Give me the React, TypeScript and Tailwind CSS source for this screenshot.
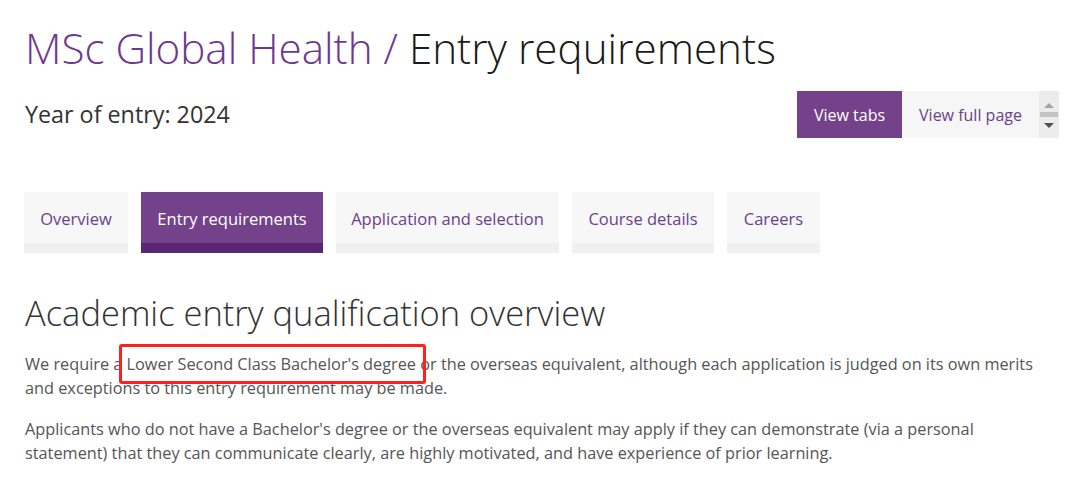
import React from "react";

const tabs = [
  { label: "Overview", w: "w-[104px]" },
  { label: "Entry requirements", w: "w-[182px]", active: true },
  { label: "Application and selection", w: "w-[223px]" },
  { label: "Course details", w: "w-[142px]" },
  { label: "Careers", w: "w-[93px]" },
];

export default function App() {
  return (
    <div
      className="w-[1080px] h-[481px] bg-white overflow-hidden pl-[25px]"
      style={{ fontFamily: '"Open Sans", sans-serif' }}
    >
      <h1 className="pt-[20px] text-[42.2px] leading-[56px] font-light text-[#1a1a1a] whitespace-nowrap">
        <span className="text-[#6e3891]">MSc Global Health / </span>Entry requirements
      </h1>
      <div className="mt-[15px] flex items-start justify-between pr-[21px]">
        <div className="pt-[8px] text-[23.3px] leading-[30px] text-[#333]">Year of entry: 2024</div>
        <div className="flex h-[47px]">
          <div className="w-[105px] bg-[#74428a] text-white text-[16px] flex items-center justify-center">View tabs</div>
          <div className="w-[137px] bg-[#f6f6f6] text-[#6b3f8c] text-[16px] flex items-center justify-center">View full page</div>
          <div className="w-[20px] bg-[#ececec] flex flex-col items-center pt-[11px]">
            <svg width="12" height="7" viewBox="0 0 12 7"><path d="M1 6 L6 1 L11 6 Z" fill="#a5a5a5" /></svg>
            <div className="mt-[3px] w-[18px] h-[5px] bg-[#c4c4c4]" />
            <svg className="mt-[6px]" width="10" height="6" viewBox="0 0 10 6"><path d="M0 0 L10 0 L5 5 Z" fill="#505050" /></svg>
          </div>
        </div>
      </div>
      <div className="mt-[54px] flex gap-[13px] ml-[-1px]">
        {tabs.map((t) => (
          <div key={t.label} className={`${t.w} h-[61px] flex flex-col`}>
            <div
              className={`flex-1 flex items-center justify-center text-[16.5px] pt-[4px] ${
                t.active ? "bg-[#74428a] text-white" : "bg-[#f7f7f7] text-[#6b3f8c]"
              }`}
            >
              {t.label}
            </div>
            <div className={`h-[10px] ${t.active ? "bg-[#5c2574]" : "bg-[#f0f0f0]"}`} />
          </div>
        ))}
      </div>
      <h2 className="mt-[37px] text-[34.5px] leading-[46px] font-light text-[#333] whitespace-nowrap">
        Academic entry qualification overview
      </h2>
      <p className="mt-[16px] text-[16.3px] leading-[24px] text-[#555] w-[1030px]">
        We require a{" "}
        <span className="relative">
          Lower Second Class Bachelor's degree
          <span className="absolute left-[-8px] right-[-10px] top-[-9px] bottom-[-9px] border-[3px] border-[#fe1f1f] rounded-[3px]" />
        </span>{" "}
        or the overseas equivalent, although each application is judged on its own merits and exceptions to this entry requirement may be made.
      </p>
      <p className="mt-[17px] text-[16.3px] leading-[24px] text-[#555] w-[1000px]">
        Applicants who do not have a Bachelor's degree or the overseas equivalent may apply if they can demonstrate (via a personal statement) that they can communicate clearly, are highly motivated, and have experience of prior learning.
      </p>
    </div>
  );
}
